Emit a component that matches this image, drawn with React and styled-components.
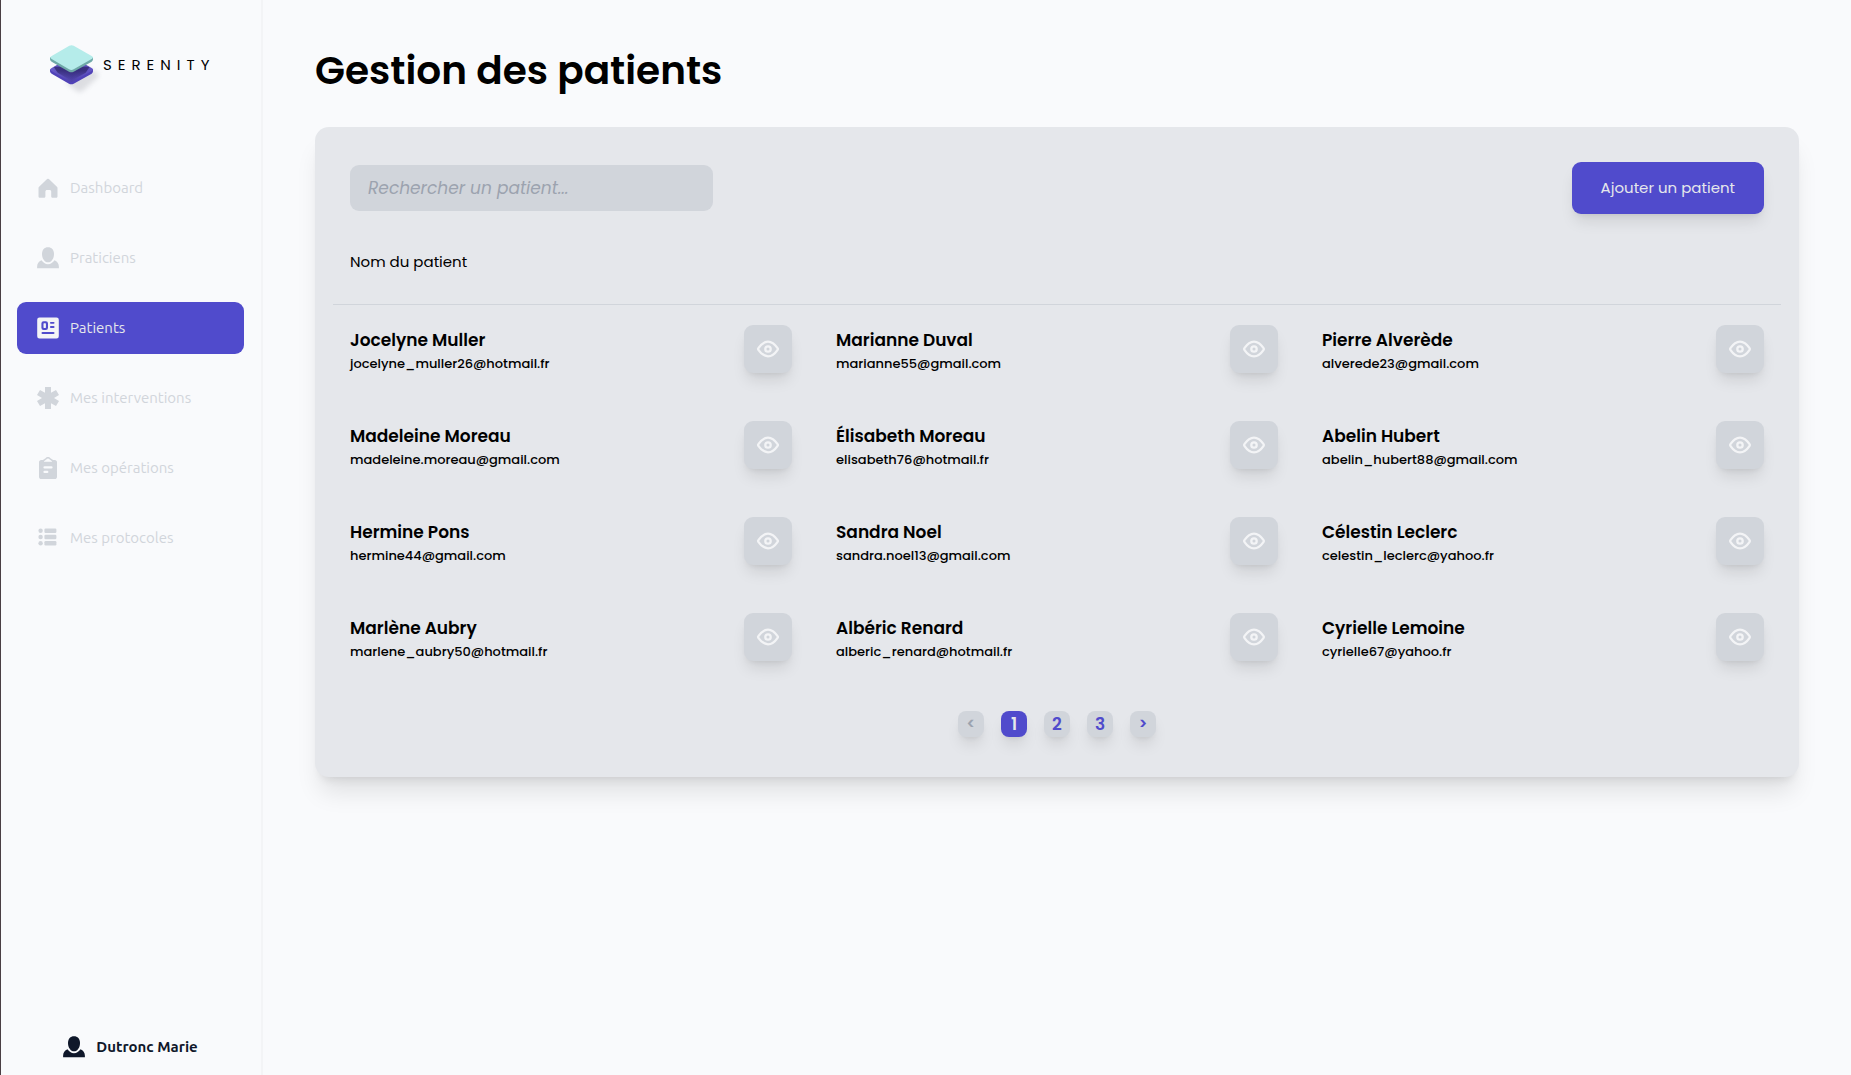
import React, { useState } from 'react';
import styled, { createGlobalStyle, ThemeProvider } from 'styled-components';

const theme = {
  page: '#f9fafc',
  panel: '#e5e7eb',
  muted: '#d1d5db',
  placeholder: '#9ca3af',
  primary: '#504bcc',
  ink: '#000000',
  navy: '#0f172a',
  display: 'Poppins, Inter, "Liberation Sans", sans-serif',
  ui: 'Ubuntu, "Open Sans", "Noto Sans", sans-serif',
  shadow: '0 10px 15px -3px rgba(0, 0, 0, 0.1), 0 4px 6px -4px rgba(0, 0, 0, 0.1)',
  shadowLarge: '0 20px 25px -5px rgba(0, 0, 0, 0.1), 0 8px 10px -6px rgba(0, 0, 0, 0.1)',
};

const GlobalStyle = createGlobalStyle`
  *, *::before, *::after { box-sizing: border-box; }
  body {
    margin: 0;
    background: ${theme.page};
    color: ${theme.ink};
    font-family: ${theme.display};
  }
  button, input { font: inherit; }
`;

const Layout = styled.div`
  display: flex;
  min-height: 100vh;
  border-left: 1px solid #4a3f44;
`;

const Sidebar = styled.aside`
  display: flex;
  flex-direction: column;
  flex: none;
  width: 262px;
  padding: 42px 17px 16px 16px;
  border-right: 2px solid #f3f4f6;
  font-family: ${(p) => p.theme.ui};
`;

const Brand = styled.a`
  display: flex;
  align-items: flex-start;
  height: 48px;
  padding-left: 30px;
  color: inherit;
  text-decoration: none;
`;

const BrandName = styled.span`
  font-family: ${(p) => p.theme.display};
  font-size: 15px;
  line-height: 46px;
  letter-spacing: 6px;
`;

const Nav = styled.nav`
  display: flex;
  flex-direction: column;
  gap: 18px;
  margin-top: 72px;
`;

const NavLink = styled.a`
  display: flex;
  align-items: center;
  gap: 11px;
  height: 52px;
  padding: 0 20px;
  border-radius: 9px;
  background: ${(p) => (p.$active ? p.theme.primary : 'transparent')};
  color: ${(p) => (p.$active ? p.theme.panel : p.theme.muted)};
  font-size: 15px;
  line-height: 24px;
  text-decoration: none;

  svg { color: ${(p) => (p.$active ? '#f3f4f6' : p.theme.muted)}; }
`;

const Account = styled.a`
  display: flex;
  align-items: center;
  justify-content: center;
  gap: 11px;
  margin-top: auto;
  color: ${(p) => p.theme.navy};
  font-size: 15px;
  line-height: 24px;
  font-weight: 700;
  text-decoration: none;
`;

const Main = styled.main`
  flex: 1;
  min-width: 0;
  padding: 41px 52px;
`;

const Title = styled.h1`
  margin: 0 0 26px;
  font-size: 39px;
  line-height: 60px;
  font-weight: 600;
`;

const Card = styled.section`
  padding: 35px 18px 40px;
  border-radius: 14px;
  background: ${(p) => p.theme.panel};
  box-shadow: ${(p) => p.theme.shadowLarge};
`;

const Toolbar = styled.div`
  display: flex;
  align-items: center;
  justify-content: space-between;
  gap: 24px;
  padding: 0 17px;
`;

const Search = styled.input`
  flex: 0 1 363px;
  min-width: 0;
  height: 46px;
  padding: 0 18px;
  border: 0;
  border-radius: 9px;
  background: ${(p) => p.theme.muted};
  color: ${(p) => p.theme.ink};
  font-size: 17px;

  &::placeholder {
    color: ${(p) => p.theme.placeholder};
    font-style: italic;
    opacity: 1;
  }
`;

const AddButton = styled.button`
  flex: none;
  height: 52px;
  padding: 0 29px;
  border: 0;
  border-radius: 9px;
  background: ${(p) => p.theme.primary};
  color: ${(p) => p.theme.panel};
  font-size: 15px;
  line-height: 24px;
  box-shadow: ${(p) => p.theme.shadow};
  cursor: pointer;
`;

const ListHeading = styled.h2`
  margin: 0;
  padding: 36px 17px 30px;
  border-bottom: 1px solid ${(p) => p.theme.muted};
  font-size: 15px;
  line-height: 24px;
  font-weight: 400;
`;

const PatientGrid = styled.ul`
  display: grid;
  grid-template-columns: repeat(3, minmax(0, 1fr));
  gap: 48px 44px;
  margin: 0;
  padding: 20px 17px 0;
  list-style: none;
`;

const Patient = styled.li`
  display: flex;
  align-items: center;
  justify-content: space-between;
  gap: 16px;
  height: 48px;
`;

const PatientText = styled.div`
  display: flex;
  flex-direction: column;
  min-width: 0;
`;

const PatientName = styled.span`
  font-size: 17px;
  line-height: 30px;
  font-weight: 600;
`;

const PatientEmail = styled.span`
  font-size: 13px;
  line-height: 18px;
  font-weight: 500;
`;

const ViewButton = styled.button`
  display: grid;
  flex: none;
  place-items: center;
  width: 48px;
  height: 48px;
  padding: 0;
  border: 0;
  border-radius: 9px;
  background: ${(p) => p.theme.muted};
  color: #f3f4f6;
  box-shadow: ${(p) => p.theme.shadow};
  cursor: pointer;
`;

const Pagination = styled.nav`
  display: flex;
  justify-content: center;
  gap: 17px;
  margin-top: 50px;
`;

const PageButton = styled.button`
  display: grid;
  place-items: center;
  width: 26px;
  height: 26px;
  padding: 0;
  border: 0;
  border-radius: 8px;
  background: ${(p) => (p.$active ? p.theme.primary : p.theme.muted)};
  color: ${(p) => (p.$active ? p.theme.panel : p.theme.primary)};
  font-size: ${(p) => (p.$arrow ? '15px' : '17px')};
  line-height: 26px;
  font-weight: 600;
  box-shadow: ${(p) => p.theme.shadow};
  cursor: pointer;

  &:disabled {
    color: ${(p) => p.theme.placeholder};
    cursor: default;
  }
`;

const Icon = ({ children }) => (
  <svg width="22" height="22" viewBox="0 0 22 22" fill="currentColor" aria-hidden="true">
    {children}
  </svg>
);

const HomeIcon = () => (
  <Icon>
    <path d="M10.1 2.1a1.3 1.3 0 0 1 1.8 0l8 7.6c.4.3.6.8.6 1.3v8.2c0 .9-.7 1.6-1.6 1.6h-3.1c-.9 0-1.6-.7-1.6-1.6v-4.6c0-.9-.7-1.6-1.6-1.6H10c-.9 0-1.6.7-1.6 1.6v4.6c0 .9-.7 1.6-1.6 1.6H3.1c-.9 0-1.6-.7-1.6-1.6V11c0-.5.2-1 .6-1.3z" />
  </Icon>
);

const PersonIcon = () => (
  <Icon>
    <path d="M11 .3c3.600 0 6 2.600 6 6.700 0 4.600-2.600 8.300-6 8.300S5 11.600 5 7C5 2.900 7.400.3 11 .3z" />
    <path d="M4.500 13.300c1.500 2.400 3.800 3.900 6.500 3.900s5-1.500 6.500-3.900c2.700.9 4.400 3.400 4.400 6.400v1.600H.1v-1.600c0-3 1.700-5.500 4.400-6.400z" />
  </Icon>
);

const RecordIcon = () => (
  <Icon>
    <path
      fillRule="evenodd"
      d="M2.500.5h17A2.300 2.300 0 0 1 21.800 2.800v16.400a2.300 2.300 0 0 1-2.300 2.300h-17A2.300 2.300 0 0 1 .2 19.200V2.800A2.300 2.300 0 0 1 2.500.5zM6.600 4.300A2.200 2.200 0 0 0 4.400 6.500v4.200a2.200 2.200 0 0 0 2.200 2.200h2.200A2.200 2.200 0 0 0 11 10.700V6.500a2.200 2.200 0 0 0-2.200-2.200zM7 6.300h1.400c.3 0 .5.2.5.500v3.600c0 .3-.2.500-.5.500H7c-.3 0-.5-.2-.5-.500V6.800c0-.3.2-.5.5-.5zM13.900 4.900a.9.9 0 0 0 0 1.900h2.700a.9.9 0 0 0 0-1.900zm0 4.100a.9.9 0 0 0 0 1.900h2.700a.9.9 0 0 0 0-1.900zM5.500 15.100a1 1 0 0 0 0 2h11a1 1 0 0 0 0-2z"
    />
  </Icon>
);

const AsteriskIcon = () => (
  <Icon>
    <path d="M8 0h6v5.800l5-2.900 3 5.200L17 11l5 2.900-3 5.200-5-2.900V22H8v-5.800l-5 2.900-3-5.200L5 11 0 8.100l3-5.200 5 2.900z" />
  </Icon>
);

const ClipboardIcon = () => (
  <Icon>
    <path
      fillRule="evenodd"
      d="M11 0c1 0 1.900.5 2.500 1.200L16.100 3h1.700C19 3 20 4 20 5.100v14.800c0 1.200-1 2.100-2.200 2.100H4.200C3 22 2 21.100 2 19.900V5.100C2 4 3 3 4.200 3h1.700l2.600-1.800C9.100.5 10 0 11 0zm0 1.600c-.6 0-1.100.3-1.400.7L7 4.200c-.2.200-.1.500.2.500h7.600c.3 0 .4-.3.200-.5l-2.600-1.900c-.3-.4-.8-.7-1.400-.7zM7.500 9.300a1 1 0 0 0 0 2.200h7a1 1 0 0 0 0-2.200zm0 4.500a1 1 0 0 0 0 2.200h2.800a1 1 0 0 0 0-2.200z"
    />
  </Icon>
);

const ListIcon = () => (
  <Icon>
    {[3.7, 10, 16.3].map((y) => (
      <g key={y}>
        <circle cx="3.600" cy={y} r="2.200" />
        <rect x="7.400" y={y - 2.2} width="12" height="4.400" rx="1.200" />
      </g>
    ))}
  </Icon>
);

const EyeIcon = () => (
  <svg width="24" height="24" viewBox="0 0 24 24" fill="none" stroke="currentColor" strokeWidth="2.3" strokeLinejoin="round" aria-hidden="true">
    <path d="M2.400 12.800c-.4-.5-.4-1.100 0-1.600C4.600 8 7.500 4.700 12 4.700s7.400 3.300 9.600 6.500c.4.500.4 1.100 0 1.600-2.200 3.200-5.100 6.500-9.600 6.500s-7.400-3.300-9.600-6.500z" />
    <circle cx="12" cy="12" r="2.700" />
  </svg>
);

const LogoSvg = styled.svg`
  flex: none;
  overflow: visible;
`;

const Logo = () => (
  <LogoSvg width="56" height="48" viewBox="0 0 168 144" aria-hidden="true">
    <defs>
      <filter id="soft" x="-40%" y="-40%" width="180%" height="180%">
        <feGaussianBlur stdDeviation="8" />
      </filter>
      <linearGradient id="base" x1="0" y1="0" x2="1" y2="0">
        <stop offset="0" stopColor="#6a5ccb" />
        <stop offset="0.5" stopColor="#4e42a8" />
        <stop offset="1" stopColor="#6456c6" />
      </linearGradient>
      <linearGradient id="shade" x1="0" y1="0" x2="0" y2="1">
        <stop offset="0.3" stopColor="#2c2468" />
        <stop offset="1" stopColor="#2c2468" stopOpacity="0" />
      </linearGradient>
      <clipPath id="baseShape">
        <path d="M14 78 67 47q7-3 13 0l54 31q8 4 0 9l-54 31q-7 4-14 0L14 87q-8-5 0-9z" />
      </clipPath>
    </defs>
    <path d="M56 122 112 76l40 16q6 8-2 16l-44 40q-8 4-16 0z" fill="#8d8f99" opacity="0.26" filter="url(#soft)" />
    <path d="M9 82h129v6q0 4-4 7l-54 30q-7 4-14 0L14 95q-5-3-5-7z" fill="#5042b8" />
    <path d="M14 78 67 47q7-3 13 0l54 31q8 4 0 9l-54 31q-7 4-14 0L14 87q-8-5 0-9z" fill="url(#base)" />
    <path d="M20 74 128 74 116 92 80 112q-7 3-14 0L32 92z" fill="url(#shade)" opacity="0.7" clipPath="url(#baseShape)" />
    <path d="M9 46h129v6q0 4-4 7L80 89q-7 4-14 0L14 59q-5-3-5-7z" fill="#6fa9a8" />
    <path d="M14 42 67 11q7-3 13 0l54 31q8 4 0 9L80 82q-7 4-14 0L14 51q-8-5 0-9z" fill="#b5ecea" />
  </LogoSvg>
);

const NAV_ITEMS = [
  ['Dashboard', HomeIcon],
  ['Praticiens', PersonIcon],
  ['Patients', RecordIcon],
  ['Mes interventions', AsteriskIcon],
  ['Mes opérations', ClipboardIcon],
  ['Mes protocoles', ListIcon],
];

const PATIENTS = [
  ['Jocelyne Muller', 'jocelyne_muller26@hotmail.fr'],
  ['Marianne Duval', 'marianne55@gmail.com'],
  ['Pierre Alverède', 'alverede23@gmail.com'],
  ['Madeleine Moreau', 'madeleine.moreau@gmail.com'],
  ['Élisabeth Moreau', 'elisabeth76@hotmail.fr'],
  ['Abelin Hubert', 'abelin_hubert88@gmail.com'],
  ['Hermine Pons', 'hermine44@gmail.com'],
  ['Sandra Noel', 'sandra.noel13@gmail.com'],
  ['Célestin Leclerc', 'celestin_leclerc@yahoo.fr'],
  ['Marlène Aubry', 'marlene_aubry50@hotmail.fr'],
  ['Albéric Renard', 'alberic_renard@hotmail.fr'],
  ['Cyrielle Lemoine', 'cyrielle67@yahoo.fr'],
];

const PAGES = [1, 2, 3];

export default function App() {
  const [page, setPage] = useState(1);
  const [query, setQuery] = useState('');
  const shown = PATIENTS.filter(([name]) => name.toLowerCase().includes(query.toLowerCase()));

  return (
    <ThemeProvider theme={theme}>
      <GlobalStyle />
      <Layout>
        <Sidebar>
          <Brand href="#">
            <Logo />
            <BrandName>SERENITY</BrandName>
          </Brand>
          <Nav aria-label="Menu principal">
            {NAV_ITEMS.map(([label, Glyph]) => (
              <NavLink
                key={label}
                href="#"
                $active={label === 'Patients'}
                aria-current={label === 'Patients' ? 'page' : undefined}
              >
                <Glyph />
                {label}
              </NavLink>
            ))}
          </Nav>
          <Account href="#">
            <PersonIcon />
            Dutronc Marie
          </Account>
        </Sidebar>
        <Main>
          <Title>Gestion des patients</Title>
          <Card>
            <Toolbar>
              <Search
                type="search"
                aria-label="Rechercher un patient"
                placeholder="Rechercher un patient..."
                value={query}
                onChange={(e) => setQuery(e.target.value)}
              />
              <AddButton type="button">Ajouter un patient</AddButton>
            </Toolbar>
            <ListHeading>Nom du patient</ListHeading>
            <PatientGrid>
              {shown.map(([name, email]) => (
                <Patient key={email}>
                  <PatientText>
                    <PatientName>{name}</PatientName>
                    <PatientEmail>{email}</PatientEmail>
                  </PatientText>
                  <ViewButton type="button" aria-label={`Voir ${name}`}>
                    <EyeIcon />
                  </ViewButton>
                </Patient>
              ))}
            </PatientGrid>
            <Pagination aria-label="Pagination">
              <PageButton
                type="button"
                $arrow
                aria-label="Page précédente"
                disabled={page === 1}
                onClick={() => setPage(page - 1)}
              >
                &lt;
              </PageButton>
              {PAGES.map((n) => (
                <PageButton key={n} type="button" $active={n === page} onClick={() => setPage(n)}>
                  {n}
                </PageButton>
              ))}
              <PageButton
                type="button"
                $arrow
                aria-label="Page suivante"
                disabled={page === PAGES.length}
                onClick={() => setPage(page + 1)}
              >
                &gt;
              </PageButton>
            </Pagination>
          </Card>
        </Main>
      </Layout>
    </ThemeProvider>
  );
}
